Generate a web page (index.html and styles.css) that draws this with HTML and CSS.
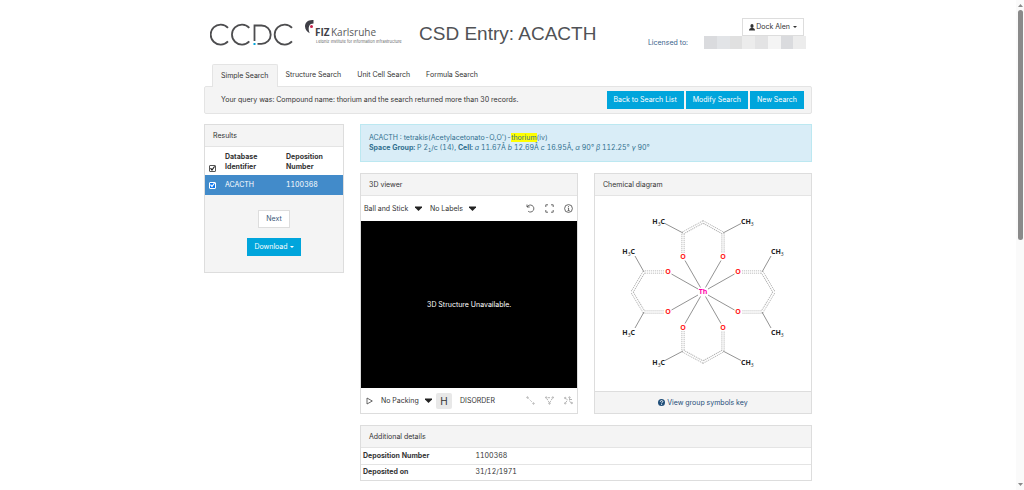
FILE: index.html
```html
<!DOCTYPE html>
<html lang="en">
<head>
    <meta charset="utf-8">
    <title>CSD Entry: ACACTH</title>
    <link rel="stylesheet" href="styles.css">
</head>
<body>
    <div class="container">
        <!-- header -->
        <header class="header">
            <a class="logo" href="#" aria-label="CCDC">
                <svg width="84" height="24" viewBox="210 23 84 24" fill="none" stroke="#4d4d4f" stroke-width="1.8">
                    <path d="M228 27.8A10 10 0 1 0 228 41.4"/>
                    <path d="M249.300 27.800A10 10 0 1 0 249.300 41.400"/>
                    <path d="M254.500 41V25.500H261.500A9.100 9.100 0 0 1 261.500 43.900H257.500"/>
                    <path d="M292 27.800A10 10 0 1 0 292 41.400"/>
                    <path d="M253.500 44H255.500" stroke="#00a5dc" stroke-width="2"/>
                </svg>
            </a>
            <a class="logo logo-fiz" href="#">
                <svg width="101" height="26" viewBox="305 19 101 26">
                    <path d="M313.500 20C308 19.500 305 22.500 305 26.500C305.200 29.500 307 32 309.700 33.200C308.500 30.500 308.400 28 309.200 26C310.100 24.200 311.500 23.600 313.500 23.500Z" fill="#3f3f46"/>
                    <circle cx="311.500" cy="26.500" r="1.500" fill="#c8214b"/>
                    <text x="315" y="36" class="fiz-name fiz-bold">FIZ</text>
                    <text x="331" y="36" class="fiz-name">Karlsruhe</text>
                    <text x="316" y="43" class="fiz-sub">Leibniz Institute for Information Infrastructure</text>
                </svg>
            </a>
            <h1 class="title">CSD Entry: ACACTH</h1>
            <div class="account">
                <button type="button" class="btn btn-account">
                    <svg width="6" height="7" viewBox="0 0 6 7" fill="#333"><ellipse cx="3" cy="2" rx="1.600" ry="2"/><path d="M0 6.600C0 4.800 1 4.300 2.100 4.100H3.900C5 4.300 6 4.800 6 6.600Z"/></svg>
                    Dock Alen
                    <span class="caret"></span>
                </button>
                <div class="license">
                    <span>Licensed to:</span>
                    <div class="mask"><i class="m1"></i><i class="m2"></i><i class="m3"></i><i class="m4"></i><i class="m5"></i><i class="m6"></i><i class="m1"></i><i class="m4"></i></div>
                </div>
            </div>
        </header>

        <!-- search tabs -->
        <nav class="tabs">
            <a class="tab active" href="#">Simple Search</a>
            <a class="tab" href="#">Structure Search</a>
            <a class="tab" href="#">Unit Cell Search</a>
            <a class="tab" href="#">Formula Search</a>
        </nav>
        <div class="query">
            <span class="query-text">Your query was: Compound name: thorium and the search returned more than 30 records.</span>
            <button type="button" class="btn btn-blue">Back to Search List</button>
            <button type="button" class="btn btn-blue">Modify Search</button>
            <button type="button" class="btn btn-blue">New Search</button>
        </div>

        <div class="content">
            <!-- results -->
            <aside class="panel results">
                <h2 class="panel-head">Results</h2>
                <table class="results-table">
                    <thead>
                        <tr>
                            <th class="check"><input type="checkbox" class="box" aria-label="Select all" checked></th>
                            <th class="identifier">Database Identifier</th>
                            <th>Deposition Number</th>
                        </tr>
                    </thead>
                    <tbody>
                        <tr>
                            <td class="check"><input type="checkbox" class="box box-on" aria-label="Select ACACTH" checked></td>
                            <td>ACACTH</td>
                            <td>1100368</td>
                        </tr>
                    </tbody>
                </table>
                <div class="results-foot">
                    <button type="button" class="btn btn-next">Next</button>
                    <button type="button" class="btn btn-blue">Download <span class="caret"></span></button>
                </div>
            </aside>

            <main class="entry">
                <div class="info">
                    <p>ACACTH : tetrakis(Acetylacetonato-O,O')-<mark>thorium</mark>(iv)</p>
                    <p><b>Space Group:</b> P 2<sub>1</sub>/c (14), <b>Cell:</b> <i>a</i> 11.67Å <i>b</i> 12.69Å <i>c</i> 16.95Å, <i>α</i> 90° <i>β</i> 112.25° <i>γ</i> 90°</p>
                </div>

                <div class="columns">
                    <!-- 3D viewer -->
                    <section class="panel viewer">
                        <h2 class="panel-head">3D viewer</h2>
                        <div class="toolbar">
                            <label class="drop">
                                <select aria-label="Style"><option>Ball and Stick</option></select>
                                <svg width="7" height="5" viewBox="0 0 7 5"><path d="M0 .5H7V1.500L3.500 5L0 1.500Z" fill="#222"/></svg>
                            </label>
                            <label class="drop">
                                <select aria-label="Labels"><option>No Labels</option></select>
                                <svg width="7" height="5" viewBox="0 0 7 5"><path d="M0 .5H7V1.500L3.500 5L0 1.500Z" fill="#222"/></svg>
                            </label>
                            <div class="tools">
                                <button type="button" class="tool" aria-label="Reset"><svg width="9" height="9" viewBox="0 0 9 9"><path d="M1 .5V3H3.700M1.200 3A3.500 3.500 0 1 1 2.200 7.300"/></svg></button>
                                <button type="button" class="tool" aria-label="Full screen"><svg width="9" height="9" viewBox="0 0 9 9"><path d="M.8 3V.8H3M6 .8H8.200V3M8.200 6V8.200H6M3 8.200H.8V6"/></svg></button>
                                <button type="button" class="tool" aria-label="Information"><svg width="9" height="9" viewBox="0 0 9 9"><circle cx="4.500" cy="4.500" r="3.900"/><path d="M3.800 4H4.600V6.500M3.600 6.600H5.600M4.500 2V2.900"/></svg></button>
                            </div>
                        </div>
                        <div class="stage">3D Structure Unavailable.</div>
                        <div class="toolbar">
                            <button type="button" class="tool play" aria-label="Play"><svg width="7" height="8" viewBox="0 0 7 8"><path d="M1 1L6.300 4L1 7Z"/></svg></button>
                            <label class="drop">
                                <select aria-label="Packing"><option>No Packing</option></select>
                                <svg width="7" height="5" viewBox="0 0 7 5"><path d="M0 .5H7V1.500L3.500 5L0 1.500Z" fill="#222"/></svg>
                            </label>
                            <button type="button" class="hydrogen">H</button>
                            <button type="button" class="disorder">DISORDER</button>
                            <div class="tools faded">
                                <button type="button" class="tool" aria-label="Distance"><svg width="9" height="9" viewBox="0 0 9 9"><circle cx="1.500" cy="1.500" r=".7"/><circle cx="7.500" cy="7.500" r=".7"/><path d="M2.500 2.500L6.500 6.500" stroke-dasharray="1 1"/></svg></button>
                                <button type="button" class="tool" aria-label="Angle"><svg width="9" height="9" viewBox="0 0 9 9"><circle cx="1.200" cy="1.500" r=".7"/><circle cx="7.800" cy="1.500" r=".7"/><circle cx="4.500" cy="7.500" r=".7"/><path d="M1.800 2.500L4.100 6.500M7.200 2.500L4.900 6.500M3 1.700H6" stroke-dasharray="2 1"/></svg></button>
                                <button type="button" class="tool" aria-label="Torsion"><svg width="9" height="9" viewBox="0 0 9 9"><circle cx="1.200" cy="2" r=".7"/><circle cx="1.200" cy="7.300" r=".7"/><circle cx="5.500" cy="1.500" r=".7"/><circle cx="7.800" cy="7" r=".7"/><path d="M2 2.500L3.500 4L1.800 6.500M5.500 2.500V5.500L7 6.500M6 3.500H8" stroke-dasharray="2 1"/></svg></button>
                            </div>
                        </div>
                    </section>

                    <!-- chemical diagram -->
                    <section class="panel diagram">
                        <h2 class="panel-head">Chemical diagram</h2>
                        <svg class="molecule" viewBox="595 196 216 195">
                            <defs>
                                <g id="ring-v">
                                    <path class="arom" d="M683 253V233L703 222L723 233V253"/>
                                    <path class="arom-in" d="M683 253V233L703 222L723 233V253"/>
                                    <path class="bond" d="M665 223.500L683 233M741 223.500L723 233M685 260.500L700.500 287.500M721 260.500L705.500 287.500"/>
                                </g>
                                <g id="ring-h">
                                    <path class="arom" d="M664 272H644L632 292L644 312H664"/>
                                    <path class="arom-in" d="M664 272H644L632 292L644 312H664"/>
                                    <path class="bond" d="M635 256L644 272M635 328L644 312M671.500 274L698 289M671.500 310L698 295"/>
                                </g>
                            </defs>
                            <use href="#ring-v"/>
                            <use href="#ring-v" transform="matrix(1 0 0 -1 0 584)"/>
                            <use href="#ring-h"/>
                            <use href="#ring-h" transform="matrix(-1 0 0 1 1406 0)"/>
                            <g class="oxygen">
                                <text x="683" y="259">O</text><text x="723" y="259">O</text>
                                <text x="668" y="274">O</text><text x="738" y="274">O</text>
                                <text x="668" y="314">O</text><text x="738" y="314">O</text>
                                <text x="683" y="330">O</text><text x="723" y="330">O</text>
                            </g>
                            <text x="703" y="294" class="metal">Th</text>
                            <g class="methyl left">
                                <text x="665" y="224">H<tspan class="sub" dy="2">3</tspan><tspan dy="-2">C</tspan></text>
                                <text x="635" y="254">H<tspan class="sub" dy="2">3</tspan><tspan dy="-2">C</tspan></text>
                                <text x="635" y="335">H<tspan class="sub" dy="2">3</tspan><tspan dy="-2">C</tspan></text>
                                <text x="665" y="365">H<tspan class="sub" dy="2">3</tspan><tspan dy="-2">C</tspan></text>
                            </g>
                            <g class="methyl">
                                <text x="741" y="224">CH<tspan class="sub" dy="2">3</tspan></text>
                                <text x="771" y="254">CH<tspan class="sub" dy="2">3</tspan></text>
                                <text x="771" y="335">CH<tspan class="sub" dy="2">3</tspan></text>
                                <text x="741" y="365">CH<tspan class="sub" dy="2">3</tspan></text>
                            </g>
                        </svg>
                        <div class="panel-foot">
                            <a href="#"><svg width="7" height="7" viewBox="0 0 7 7"><circle cx="3.500" cy="3.500" r="3.500" fill="#1f4e79"/><path d="M2.300 2.700C2.300 1.200 4.800 1.200 4.800 2.600C4.800 3.400 3.600 3.300 3.600 4.300M3.600 4.900V5.800" fill="none" stroke="#fff"/></svg> View group symbols key</a>
                        </div>
                    </section>
                </div>

                <!-- details -->
                <section class="panel">
                    <h2 class="panel-head">Additional details</h2>
                    <table class="details">
                        <tr><th>Deposition Number</th><td>1100368</td></tr>
                        <tr><th>Deposited on</th><td>31/12/1971</td></tr>
                    </table>
                </section>
            </main>
        </div>
    </div>

    <!-- scroll track -->
    <div class="scroll">
        <svg width="5" height="3" viewBox="0 0 5 3"><path d="M0 3L2.500 0L5 3Z" fill="#8a8a8a"/></svg>
        <div class="scroll-rail"><div class="scroll-thumb"></div></div>
        <svg width="5" height="3" viewBox="0 0 5 3"><path d="M0 0L2.500 3L5 0Z" fill="#8a8a8a"/></svg>
    </div>
</body>
</html>
```
FILE: styles.css
```css
* {
    box-sizing: border-box;
    margin: 0;
    padding: 0;
}
body {
    padding-right: 8px;
    background: #fff;
    color: #333;
    font-family: Inter, "Liberation Sans", Arial, sans-serif;
    font-size: 7px;
    font-variant-numeric: tabular-nums;
    line-height: 10px;
}
button, select, input {
    font: inherit;
    color: inherit;
}
a {
    color: #333;
    text-decoration: none;
}
svg {
    flex: none;
}
.container {
    max-width: 608px;
    margin: 0 auto;
}

/* header */
.header {
    display: flex;
    align-items: flex-start;
    height: 64px;
    padding: 18px 8px 0 6px;
}
.logo {
    display: flex;
    padding-top: 5px;
}
.logo-fiz {
    margin-left: 11px;
    padding-top: 1px;
}
.fiz-name {
    font: 10px "Open Sans", sans-serif;
    fill: #58585a;
}
.fiz-bold {
    font-weight: bold;
    fill: #3f3f46;
}
.fiz-sub {
    font: 4px Inter, sans-serif;
    fill: #666;
}
.title {
    margin-left: 13px;
    color: #505256;
    font: 19px/32px "Liberation Sans", Arial, sans-serif;
}
.account {
    display: flex;
    flex-direction: column;
    align-items: flex-end;
    margin-left: auto;
}
.btn {
    display: flex;
    align-items: center;
    height: 18px;
    padding: 0 6px;
    border: 1px solid #ddd;
    background: #fff;
    white-space: nowrap;
}
.btn-account {
    gap: 1px;
}
.btn-blue {
    border-color: #00a5dc;
    background: #00a5dc;
    color: #fff;
}
.caret {
    margin-left: 2px;
    border: 2px solid transparent;
    border-top-color: currentColor;
    border-bottom: 0;
}
.license {
    display: flex;
    align-items: center;
    gap: 16px;
    margin-right: -2px;
    color: #3b648c;
}
.mask {
    display: flex;
    width: 102px;
    height: 13px;
}
.mask i {
    flex: 1;
}
.m1 { background: #dadbde; }
.m2 { background: #e2e4e7; }
.m3 { background: #e0e0e0; }
.m4 { background: #ececec; }
.m5 { background: #e3e3e4; }
.m6 { background: #f4f4f4; }

/* tabs and query bar */
.tabs {
    display: flex;
    padding-left: 8px;
}
.tab {
    height: 22px;
    padding: 0 8px;
    line-height: 22px;
}
.tab.active {
    position: relative;
    height: 23px;
    margin-bottom: -1px;
    border: 1px solid #e4e4e4;
    border-bottom: 0;
    border-radius: 2px 2px 0 0;
    background: #f4f4f4;
}
.query {
    display: flex;
    align-items: center;
    gap: 2px;
    height: 28px;
    padding: 0 7px 0 16px;
    border: 1px solid #e4e4e4;
    border-radius: 2px;
    background: #f4f4f4;
}
.query-text {
    flex: 1;
}

/* panels */
.content {
    display: grid;
    grid-template-columns: 140px 1fr;
    align-items: start;
    gap: 16px;
    margin-top: 10px;
}
.panel {
    border: 1px solid #ddd;
    background: #fff;
}
.panel-head {
    height: 22px;
    padding: 0 8px;
    border-bottom: 1px solid #e4e4e4;
    background: #f4f4f4;
    font-size: 7px;
    font-weight: normal;
    line-height: 21px;
}
.results-table {
    width: 100%;
    border-collapse: collapse;
    table-layout: fixed;
    text-align: left;
}
.results-table thead tr {
    height: 28px;
    vertical-align: bottom;
}
.results-table th {
    padding: 0 16px 3px 0;
}
.results-table .check {
    width: 20px;
    padding-right: 0;
    padding-left: 4px;
}
.results-table .identifier {
    width: 61px;
}
.results-table tbody tr {
    height: 20px;
    background: #428bca;
    color: #fff;
}
.box {
    display: flex;
    align-items: center;
    justify-content: center;
    width: 7px;
    height: 7px;
    appearance: none;
    border: 1px solid #555;
    border-radius: 1px;
    background: #fff;
    color: #222;
}
.box:checked::after {
    width: 5px;
    height: 5px;
    background: currentColor;
    clip-path: polygon(0 50%, 20% 35%, 40% 60%, 85% 0, 100% 15%, 40% 100%);
    content: "";
}
.box-on {
    border-color: #fff;
    background: #0b76ef;
    color: #fff;
}
.results-foot {
    display: flex;
    flex-direction: column;
    align-items: center;
    gap: 10px;
    padding: 15px 0 16px;
    background: #f4f4f4;
}
.btn-next {
    padding: 0 7px;
    color: #3b5878;
}

.entry {
    display: flex;
    flex-direction: column;
    gap: 11px;
}
.info {
    padding: 8px;
    border: 1px solid #bce8f1;
    background: #d9edf7;
    color: #31708f;
}
.info mark {
    background: #ff0;
    color: inherit;
}
.info sub {
    font-size: 5px;
    line-height: 0;
}
.columns {
    display: grid;
    grid-template-columns: 1fr 1fr;
    gap: 16px;
}

/* 3D viewer */
.viewer {
    display: flex;
    flex-direction: column;
}
.toolbar {
    display: flex;
    align-items: center;
    gap: 8px;
    height: 25px;
    padding: 0 4px 0 3px;
}
.drop {
    display: flex;
    align-items: center;
    gap: 6px;
}
.drop select {
    appearance: none;
    border: 0;
    background: none;
}
.tools {
    display: flex;
    gap: 10px;
    margin-left: auto;
}
.tool {
    display: flex;
    border: 0;
    background: none;
}
.tool svg {
    fill: none;
    stroke: #444;
    stroke-width: 0.8;
}
.faded {
    opacity: 0.5;
}
.play {
    padding-left: 2px;
}
.stage {
    display: flex;
    flex: 1;
    align-items: center;
    justify-content: center;
    min-height: 166px;
    background: #000;
    color: #fff;
}
.hydrogen {
    width: 16px;
    height: 16px;
    margin-left: -4px;
    border: 0;
    border-radius: 2px;
    background: #e8e8e8;
    font-size: 10px;
}
.disorder {
    border: 0;
    background: none;
}

/* chemical diagram */
.diagram {
    display: flex;
    flex-direction: column;
}
.molecule {
    display: block;
    width: 100%;
    font-family: "Open Sans", sans-serif;
    font-size: 7px;
    font-weight: bold;
}
.bond {
    fill: none;
    stroke: #777;
    stroke-width: 0.8;
}
.arom {
    fill: none;
    stroke: #aaa;
    stroke-width: 3;
    stroke-dasharray: 1.2 0.8;
}
.arom-in {
    fill: none;
    stroke: #fff;
    stroke-width: 1.4;
}
.oxygen {
    fill: #f22;
    text-anchor: middle;
}
.metal {
    fill: #f0a;
    text-anchor: middle;
}
.methyl {
    fill: #222;
}
.methyl.left {
    text-anchor: end;
}
.sub {
    font-size: 5px;
    font-weight: normal;
}
.panel-foot {
    flex: 1;
    border-top: 1px solid #ddd;
    background: #f4f4f4;
    line-height: 21px;
    text-align: center;
}
.panel-foot a {
    color: #1f4e79;
}
.panel-foot svg {
    vertical-align: -1px;
}

/* details */
.details {
    width: 100%;
    border-collapse: collapse;
    text-align: left;
}
.details tr {
    height: 16px;
}
.details tr + tr {
    border-top: 1px solid #e4e4e4;
}
.details th {
    width: 25%;
    padding-left: 2px;
}
.details td {
    padding-left: 2px;
}

/* scroll track */
.scroll {
    position: fixed;
    top: 0;
    right: 0;
    bottom: 0;
    display: flex;
    flex-direction: column;
    align-items: center;
    gap: 3px;
    width: 8px;
    padding: 4px 0;
    background: #fafafa;
}
.scroll-rail {
    flex: 1;
}
.scroll-thumb {
    width: 5px;
    height: 49%;
    border-radius: 3px;
    background: #8a8a8a;
}
```
